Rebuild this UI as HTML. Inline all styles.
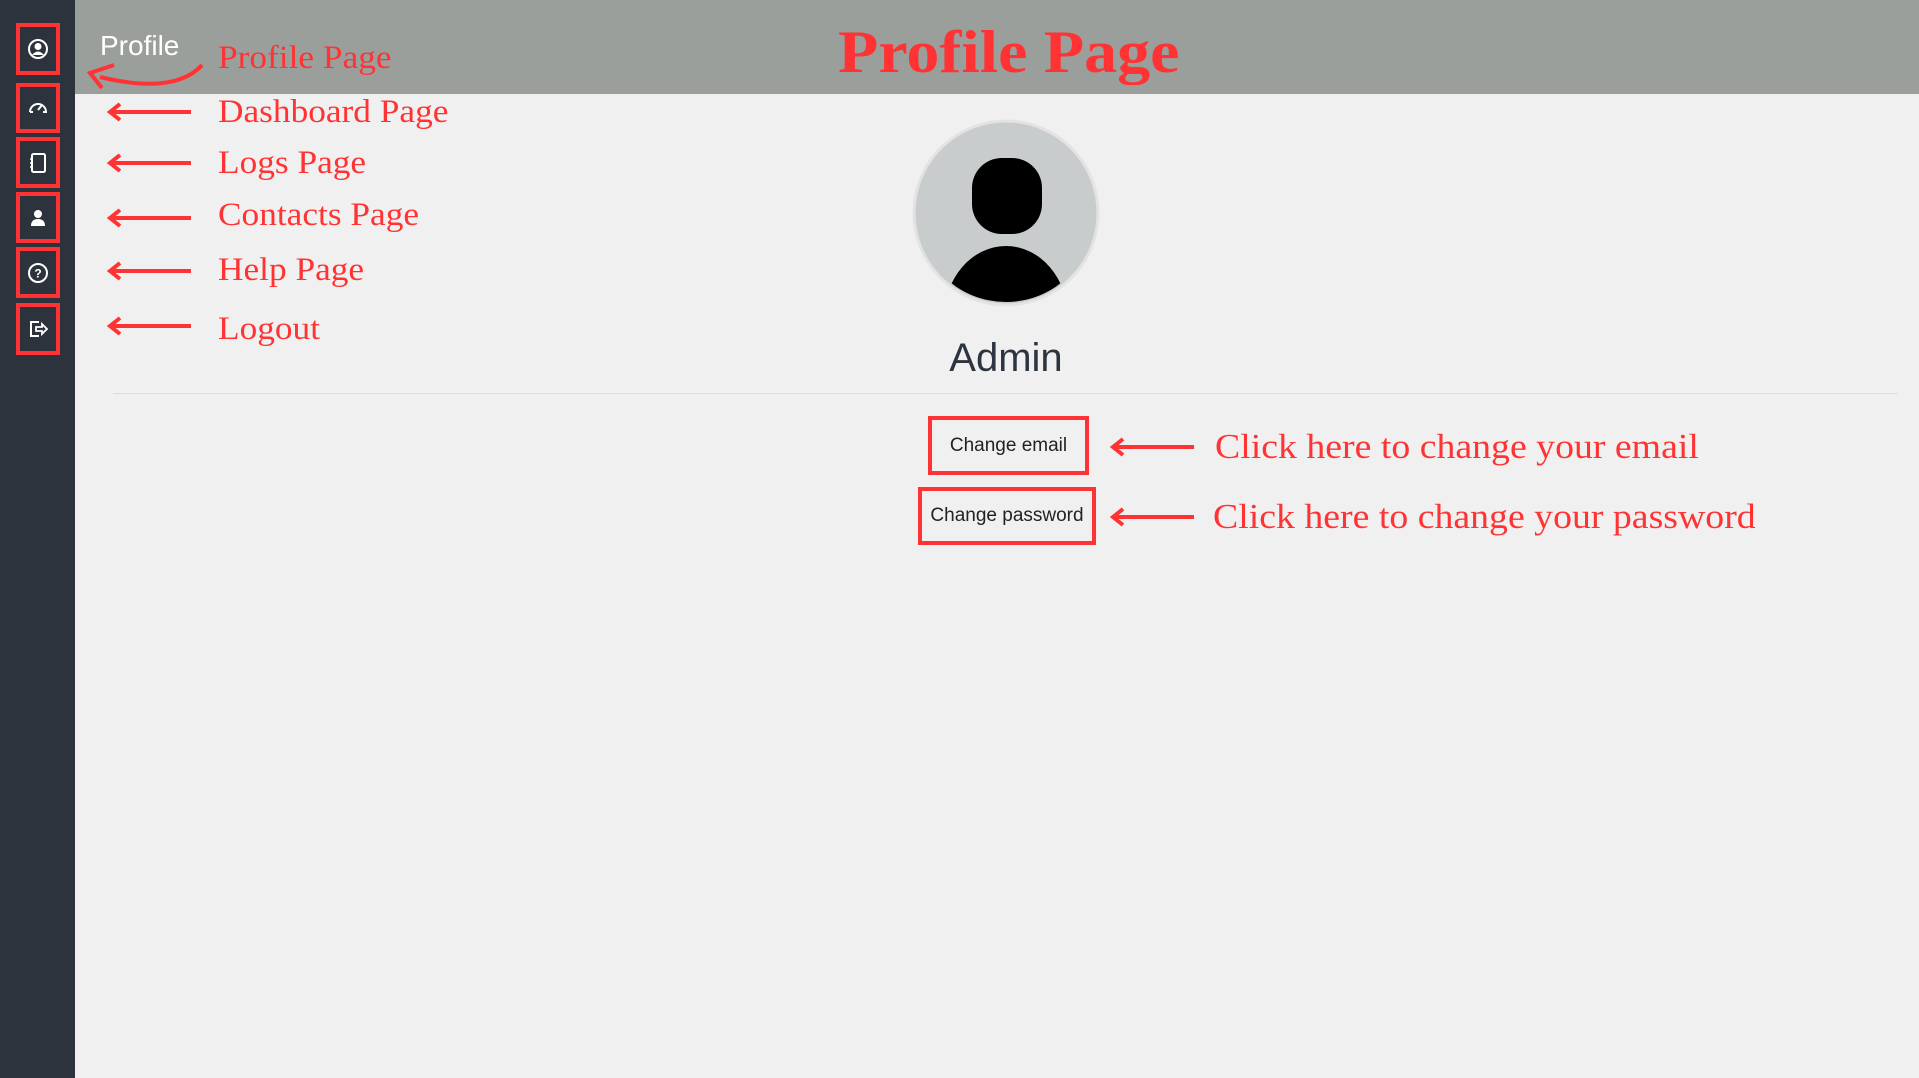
<!DOCTYPE html>
<html><head><meta charset="utf-8"><style>
body{margin:0;width:1919px;height:1078px;background:#f0f0f0;position:relative;overflow:hidden;font-family:"Liberation Sans",sans-serif}
.side{position:absolute;left:0;top:0;width:75px;height:1078px;background:#2d333d}
.head{position:absolute;left:75px;top:0;right:0;height:94px;background:#9a9f9c}
.box{position:absolute;left:16px;width:36px;border:4px solid #f33;display:flex;align-items:center;justify-content:center}
.lbl{position:absolute;color:#f33;font-family:"Liberation Serif",serif;font-size:33px;white-space:nowrap;line-height:1;transform:scaleX(1.07);transform-origin:left}
.btn{position:absolute;border:4px solid #f33;box-sizing:border-box;display:flex;align-items:center;justify-content:center;font-size:19px;color:#222}
svg.arr{position:absolute}
</style></head><body>
<div class="side"></div>
<div class="head"></div>
<div style="position:absolute;left:100px;top:30px;color:#fff;font-size:28px">Profile</div>
<div class="lbl" style="left:838px;top:22px;font-size:60px;font-weight:bold;transform:scaleX(1.1)">Profile Page</div>

<div class="box" style="top:23px;height:44px"><svg width="22" height="22" viewBox="0 0 22 22"><circle cx="11" cy="11" r="9" fill="none" stroke="#fff" stroke-width="2"/><circle cx="11" cy="8.5" r="3.5" fill="#fff"/><path d="M5 17 Q11 10 17 17" fill="#fff"/></svg></div>
<div class="box" style="top:83px;height:42px"><svg width="22" height="22" viewBox="0 0 22 22"><path d="M3 15 A8 8 0 1 1 19 15 L16 15 M3 15 L6 15" fill="none" stroke="#fff" stroke-width="2"/><path d="M11 13 L15 8" stroke="#fff" stroke-width="2"/></svg></div>
<div class="box" style="top:137px;height:43px"><svg width="22" height="22" viewBox="0 0 22 22"><rect x="5" y="2" width="13" height="18" rx="1.5" fill="none" stroke="#fff" stroke-width="2"/><path d="M3 7h3M3 11h3M3 15h3" stroke="#fff" stroke-width="1.5"/></svg></div>
<div class="box" style="top:192px;height:43px"><svg width="22" height="22" viewBox="0 0 22 22"><circle cx="11" cy="7" r="4" fill="#fff"/><path d="M4 19 Q4 12 11 12 Q18 12 18 19Z" fill="#fff"/></svg></div>
<div class="box" style="top:247px;height:43px"><svg width="22" height="22" viewBox="0 0 22 22"><circle cx="11" cy="11" r="9" fill="none" stroke="#fff" stroke-width="2"/><text x="11" y="15.5" fill="#fff" font-size="12" font-weight="bold" text-anchor="middle" font-family="Liberation Sans">?</text></svg></div>
<div class="box" style="top:303px;height:44px"><svg width="22" height="22" viewBox="0 0 22 22"><path d="M12 4H4v14h8" fill="none" stroke="#fff" stroke-width="2"/><path d="M9 9h6V6l5 5-5 5v-3H9z" fill="none" stroke="#fff" stroke-width="1.8"/></svg></div>

<svg class="arr" style="left:80px;top:55px" width="130" height="40"><path d="M122 10 Q95 40 20 22" fill="none" stroke="#f33" stroke-width="4"/><path d="M34 10 L10 18 L22 33" fill="none" stroke="#f33" stroke-width="4"/></svg>
<div class="lbl" style="left:218px;top:42px">Profile Page</div>
<div class="lbl" style="left:218px;top:96px">Dashboard Page</div>
<div class="lbl" style="left:218px;top:147px">Logs Page</div>
<div class="lbl" style="left:218px;top:199px">Contacts Page</div>
<div class="lbl" style="left:218px;top:254px">Help Page</div>
<div class="lbl" style="left:218px;top:313px">Logout</div>

<svg class="arr" style="left:100px;top:95px" width="100" height="250" fill="none" stroke="#f33" stroke-width="4">
<path d="M10 17H91M20 9L10 17 20 25"/>
<path d="M10 68H91M20 60L10 68 20 76"/>
<path d="M10 123H91M20 115L10 123 20 131"/>
<path d="M10 176H91M20 168L10 176 20 184"/>
<path d="M10 231H91M20 223L10 231 20 239"/>
</svg>

<svg style="position:absolute;left:911px;top:118px" width="190" height="190" viewBox="0 0 190 190">
<defs><clipPath id="c"><circle cx="95" cy="95" r="89"/></clipPath></defs>
<circle cx="95" cy="95" r="92" fill="#c9cccd" stroke="#e3e3e3" stroke-width="3"/>
<rect x="61" y="40" width="70" height="76" rx="30" fill="#000"/>
<ellipse cx="95" cy="200" rx="62" ry="72" fill="#000" clip-path="url(#c)"/>
</svg>
<div style="position:absolute;left:806px;width:400px;text-align:center;top:336px;font-size:40px;color:#2c3440">Admin</div>
<div style="position:absolute;left:113px;right:21px;top:393px;height:1px;background:#dcdcdc"></div>

<div class="btn" style="left:928px;top:416px;width:161px;height:59px">Change email</div>
<div class="btn" style="left:918px;top:487px;width:178px;height:58px">Change password</div>
<svg class="arr" style="left:1105px;top:430px" width="100" height="100" fill="none" stroke="#f33" stroke-width="4">
<path d="M8 17H89M18 9L8 17 18 25"/><path d="M8 87H89M18 79L8 87 18 95"/>
</svg>
<div class="lbl" style="left:1215px;top:429px;font-size:35px;transform:scaleX(1.08)">Click here to change your email</div>
<div class="lbl" style="left:1213px;top:499px;font-size:35px;transform:scaleX(1.08)">Click here to change your password</div>
</body></html>
